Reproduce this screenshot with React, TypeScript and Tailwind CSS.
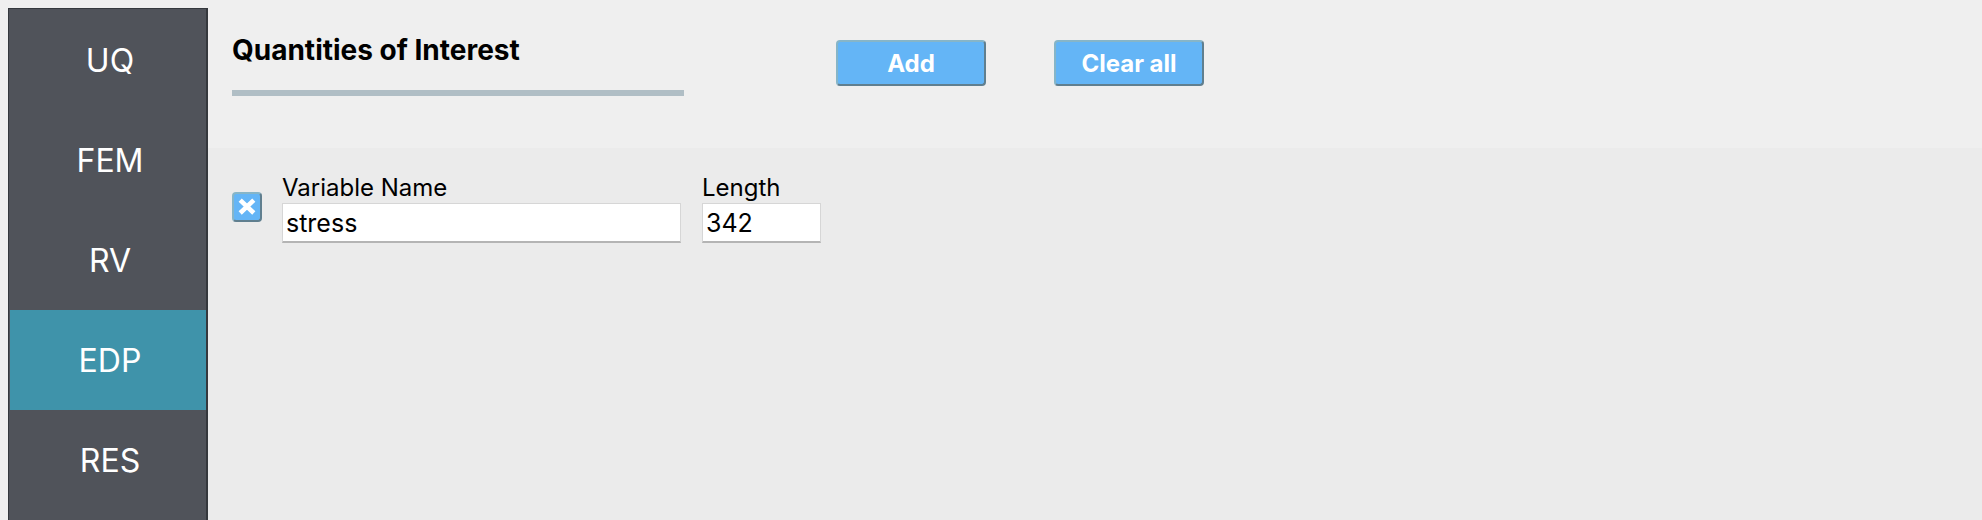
import React, { useState } from "react";

const sections = ["UQ", "FEM", "RV", "EDP", "RES"];

const raised =
  "border-2 border-t-[#86b5c8] border-l-[#86b5c8] border-r-[#607f8f] border-b-[#607f8f] bg-[#64b5f6] text-white";

const field =
  "h-10 border border-[#d6d6d6] border-b-2 border-b-[#b4b4b4] bg-white px-[3px] pt-px text-[25px] text-black outline-none";

export default function App() {
  const [active, setActive] = useState("EDP");

  return (
    <div className="flex min-h-screen bg-[#efefef] pl-2 font-['Inter',sans-serif] text-black">
      <nav
        aria-label="Sections"
        className="mt-2 flex w-[200px] shrink-0 flex-col border border-r-2 border-b-0 border-[#35383d] bg-[#50535a] pt-px pl-px"
      >
        {sections.map((name) => (
          <button
            key={name}
            type="button"
            aria-current={active === name ? "page" : undefined}
            onClick={() => setActive(name)}
            className={
              active === name
                ? "h-[100px] bg-[#3f93aa] pt-0.5 pl-1 text-[32px] text-white"
                : "h-[100px] pt-0.5 pl-1 text-[32px] text-white"
            }
          >
            {name}
          </button>
        ))}
      </nav>

      <main className="flex min-w-0 flex-1 flex-col">
        <header className="mt-2 flex h-[140px] items-start pl-6">
          <div className="w-[452px] border-b-6 border-[#b0bec5] pt-6">
            <h1 className="h-[58px] text-[28px] leading-9 font-bold">Quantities of Interest</h1>
          </div>
          <div className="mt-8 ml-[152px] flex gap-[68px]">
            <button type="button" className={`h-[46px] w-[150px] rounded pt-0.5 text-2xl font-bold ${raised}`}>
              Add
            </button>
            <button type="button" className={`h-[46px] w-[150px] rounded pt-0.5 text-2xl font-bold ${raised}`}>
              Clear all
            </button>
          </div>
        </header>

        <section className="flex flex-1 items-start bg-[#ebebeb] pt-6 pl-6">
          <button
            type="button"
            aria-label="Remove variable"
            className={`mt-5 flex size-[30px] items-center justify-center rounded ${raised}`}
          >
            <svg viewBox="0 0 26 26" className="size-[26px]" stroke="currentColor" strokeWidth="4.6" aria-hidden="true">
              <path d="M6.2 6.2 19.8 19M19.8 6.2 6.2 19" />
            </svg>
          </button>
          <div className="ml-5 flex w-[399px] flex-col">
            <label htmlFor="variable-name" className="text-2xl leading-[31px]">
              Variable Name
            </label>
            <input id="variable-name" type="text" defaultValue="stress" className={field} />
          </div>
          <div className="ml-[21px] flex w-[119px] flex-col">
            <label htmlFor="variable-length" className="text-2xl leading-[31px]">
              Length
            </label>
            <input id="variable-length" type="text" inputMode="numeric" defaultValue="342" className={field} />
          </div>
        </section>
      </main>
    </div>
  );
}
